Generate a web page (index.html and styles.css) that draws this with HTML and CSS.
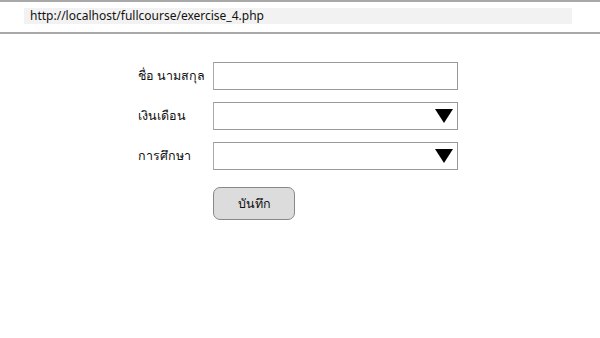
FILE: index.html
```html
<!DOCTYPE html>
<html lang="th">
  <head>
    <meta charset="UTF-8" />
    <meta name="viewport" content="width=device-width, initial-scale=1.0" />
    <title>exercise_4</title>
    <link rel="stylesheet" href="styles.css">
  </head>
  <body>
    <header class="browser">
      <div class="adres">http://localhost/fullcourse/exercise_4.php</div>
    </header>
    <main>
      <form class="skema">
        <label class="etiket">ชื่อ นามสกุล</label>
        <div class="felt"></div>

        <label class="etiket">เงินเดือน</label>
        <div class="felt vaelg"><span class="pil"></span></div>

        <label class="etiket">การศึกษา</label>
        <div class="felt vaelg"><span class="pil"></span></div>

        <span></span>
        <div>
          <button type="button" class="gem">บันทึก</button>
        </div>
      </form>
    </main>
  </body>
</html>
```

FILE: styles.css
```css
* {
  box-sizing: border-box;
}
body {
  margin: 0;
  background: white;
  font-family: "Noto Sans", "Open Sans", sans-serif;
  color: #111;
}

.browser {
  border-top: 2px solid #a8a8a8;
  border-bottom: 2px solid #a8a8a8;
  padding: 6px 28px 8px 24px;
}

.adres {
  background-color: #f2f2f2;
  height: 16px;
  padding-left: 6px;
  font-size: 12px;
  line-height: 16px;
}

.skema {
  display: grid;
  grid-template-columns: 75px 245px;
  grid-template-rows: 28px 28px 28px auto;
  row-gap: 12px;
  align-items: center;
  margin: 28px 0 0 138px;
}

.etiket {
  font-size: 12.5px;
}

.felt {
  height: 28px;
  border: 1px solid #999;
  border-left-color: #aaa;
  display: flex;
  align-items: center;
  justify-content: flex-end;
  padding-right: 4px;
}

.pil {
  width: 0;
  height: 0;
  border-left: 9px solid transparent;
  border-right: 9px solid transparent;
  border-top: 14px solid black;
}

.gem {
  display: block;
  width: 82px;
  height: 33px;
  margin-top: 5px;
  background-color: #dcdcdc;
  border: 1px solid #888;
  border-radius: 7px;
  font-family: inherit;
  font-size: 12.5px;
  color: #111;
}
```
